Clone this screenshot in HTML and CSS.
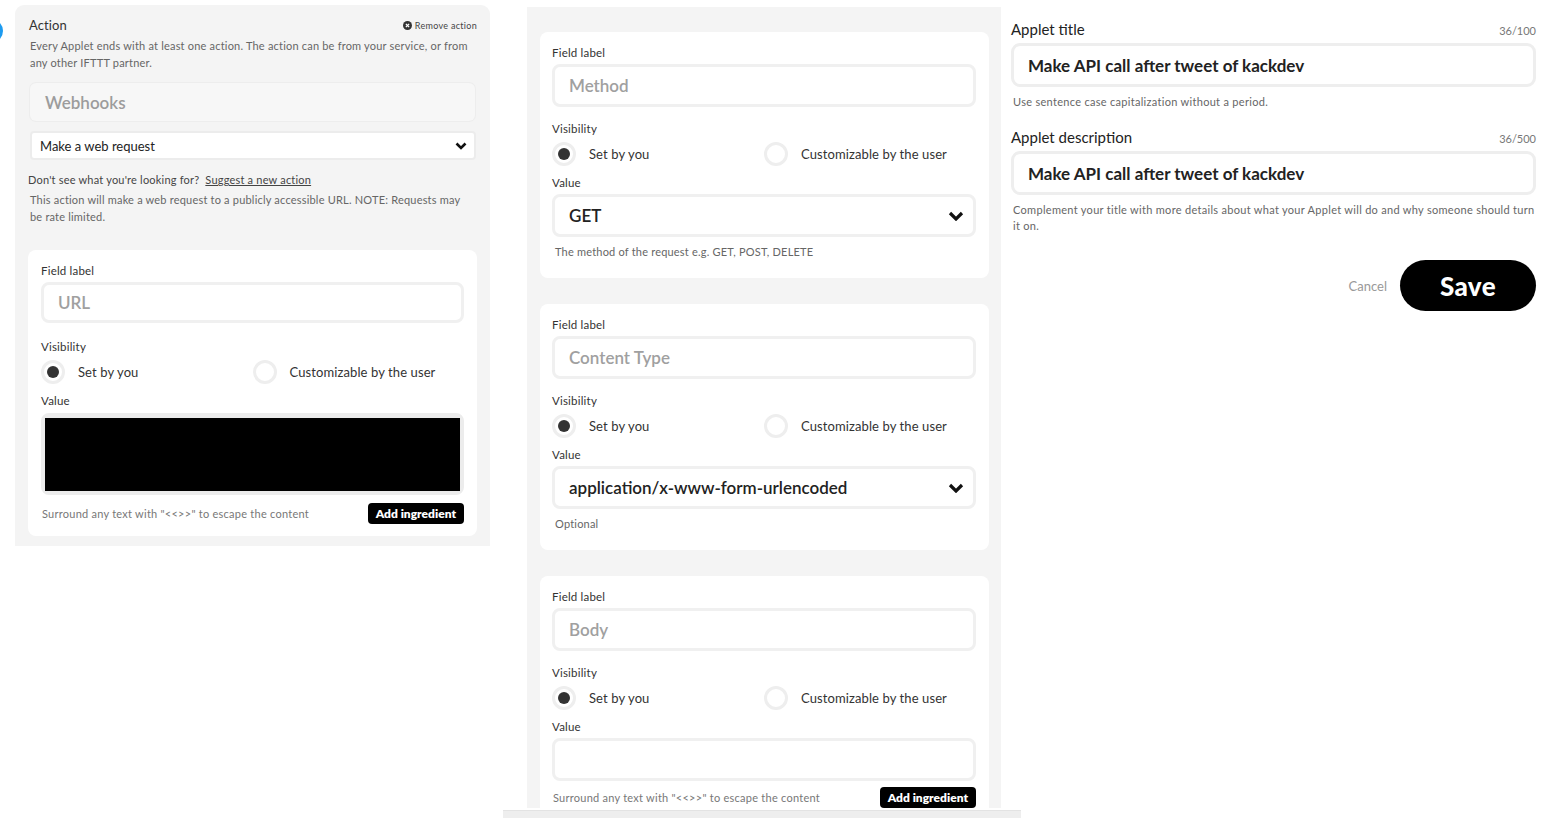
FILE: index.html
```html
<!DOCTYPE html>
<html lang="en">
<head>
<meta charset="utf-8">
<title>IFTTT Applet – Webhooks action</title>
<link rel="stylesheet" href="styles.css">
</head>
<body>
<div class="page">

  <section class="col col-left">
    <span class="service-dot"></span>
    <div class="panel panel-left">
      <div class="action-head">
        <span class="action-title">Action</span>
        <span class="remove">
          <svg width="9" height="9" viewBox="0 0 10 10"><circle cx="5" cy="5" r="5" fill="#333"/><path d="M3.2 3.2l3.6 3.6M6.8 3.2l-3.6 3.6" stroke="#fff" stroke-width="1.5"/></svg>
          Remove action
        </span>
      </div>
      <p class="desc">Every Applet ends with at least one action. The action can be from your service, or from any other IFTTT partner.</p>
      <div class="service-input">Webhooks</div>
      <div class="select-sm">
        <span>Make a web request</span>
        <svg width="12" height="8" viewBox="0 0 12 8"><path d="M1.5 1.5L6 6L10.5 1.5" fill="none" stroke="#111" stroke-width="2.6"/></svg>
      </div>
      <p class="suggest">Don't see what you're looking for? <a href="#">Suggest a new action</a></p>
      <p class="desc desc2">This action will make a web request to a publicly accessible URL. NOTE: Requests may be rate limited.</p>

      <div class="card card-left">
        <div class="lbl">Field label</div>
        <div class="field field-sm ph">URL</div>
        <div class="lbl lbl-vis lbl-vis-lg">Visibility</div>
        <div class="radios">
          <div class="radio"><span class="dot on"></span>Set by you</div>
          <div class="radio"><span class="dot"></span>Customizable by the user</div>
        </div>
        <div class="lbl lbl-val">Value</div>
        <div class="redacted"><div class="redacted-fill"></div></div>
        <div class="footer-row">
          <span class="hint-inline">Surround any text with "&lt;&lt;&gt;&gt;" to escape the content</span>
          <span class="add-btn">Add ingredient</span>
        </div>
      </div>
    </div>
  </section>

  <section class="col col-mid">
    <div class="panel panel-mid">
      <div class="card">
        <div class="lbl">Field label</div>
        <div class="field ph">Method</div>
        <div class="lbl lbl-vis">Visibility</div>
        <div class="radios">
          <div class="radio"><span class="dot on"></span>Set by you</div>
          <div class="radio"><span class="dot"></span>Customizable by the user</div>
        </div>
        <div class="lbl lbl-val">Value</div>
        <div class="field select">
          <span>GET</span>
          <svg width="16" height="10" viewBox="0 0 16 10"><path d="M2 2L8 8L14 2" fill="none" stroke="#111" stroke-width="3.2"/></svg>
        </div>
        <p class="hint">The method of the request e.g. GET, POST, DELETE</p>
      </div>

      <div class="card">
        <div class="lbl">Field label</div>
        <div class="field ph">Content Type</div>
        <div class="lbl lbl-vis">Visibility</div>
        <div class="radios">
          <div class="radio"><span class="dot on"></span>Set by you</div>
          <div class="radio"><span class="dot"></span>Customizable by the user</div>
        </div>
        <div class="lbl lbl-val">Value</div>
        <div class="field select">
          <span>application/x-www-form-urlencoded</span>
          <svg width="16" height="10" viewBox="0 0 16 10"><path d="M2 2L8 8L14 2" fill="none" stroke="#111" stroke-width="3.2"/></svg>
        </div>
        <p class="hint">Optional</p>
      </div>

      <div class="card">
        <div class="lbl">Field label</div>
        <div class="field ph">Body</div>
        <div class="lbl lbl-vis">Visibility</div>
        <div class="radios">
          <div class="radio"><span class="dot on"></span>Set by you</div>
          <div class="radio"><span class="dot"></span>Customizable by the user</div>
        </div>
        <div class="lbl lbl-val">Value</div>
        <div class="field"></div>
        <div class="footer-row footer-row-mid">
          <span class="hint-inline">Surround any text with "&lt;&lt;&gt;&gt;" to escape the content</span>
          <span class="add-btn">Add ingredient</span>
        </div>
      </div>
    </div>
    <div class="hbar"></div>
  </section>

  <section class="col col-right">
    <div class="title-row">
      <span class="big-lbl">Applet title</span>
      <span class="counter">36/100</span>
    </div>
    <div class="title-field">Make API call after tweet of kackdev</div>
    <p class="help">Use sentence case capitalization without a period.</p>

    <div class="title-row title-row-2">
      <span class="big-lbl">Applet description</span>
      <span class="counter">36/500</span>
    </div>
    <div class="title-field">Make API call after tweet of kackdev</div>
    <p class="help">Complement your title with more details about what your Applet will do and why someone should turn it on.</p>

    <div class="actions">
      <span class="cancel">Cancel</span>
      <span class="save">Save</span>
    </div>
  </section>

</div>
</body>
</html>
```

FILE: styles.css
```css
* { box-sizing: border-box; margin: 0; padding: 0; }

body {
  font-family: Lato, "Noto Sans", "DejaVu Sans", sans-serif;
  background: #fff;
  color: #333;
  width: 1555px;
  height: 824px;
  overflow: hidden;
}

.page {
  display: flex;
  align-items: flex-start;
  height: 824px;
}

/* ---------- left column ---------- */
.col-left {
  width: 503px;
  flex-shrink: 0;
  padding: 5px 0 0 15px;
  position: relative;
}

.service-dot {
  position: absolute;
  left: -21px;
  top: 19px;
  width: 24px;
  height: 24px;
  border-radius: 50%;
  background: #1d9bf0;
}

.panel { background: #f4f4f4; }

.panel-left {
  width: 475px;
  border-radius: 9px 9px 0 0;
  padding: 11px 13px 10px 13px;
}

.action-head {
  display: flex;
  justify-content: space-between;
  align-items: center;
  height: 18px;
  padding-left: 1px;
}

.action-title { font-size: 13px; color: #333; letter-spacing: 0.1px; }

.remove {
  display: flex;
  align-items: center;
  gap: 3px;
  font-size: 9px;
  color: #444;
  letter-spacing: 0.3px;
}

.desc {
  font-size: 11px;
  letter-spacing: 0.2px;
  line-height: 17px;
  color: #666;
  padding-left: 2px;
  margin-top: 3px;
}

.service-input {
  margin: 12px 2px 0 2px;
  height: 38px;
  background: #f7f7f7;
  border-radius: 6px;
  box-shadow: 0 0 0 1px #ededed;
  font-size: 17px;
  font-weight: 600;
  color: #9c9c9c;
  padding-left: 15px;
  display: flex;
  align-items: center;
}

.select-sm {
  margin: 10px 1px 0 2px;
  height: 29px;
  background: #fff;
  border: 2px solid #ececec;
  border-radius: 4px;
  display: flex;
  align-items: center;
  justify-content: space-between;
  padding: 0 7px 0 8px;
  font-size: 13px;
  color: #222;
}

.suggest {
  margin-top: 11px;
  font-size: 11px;
  letter-spacing: 0.2px;
  line-height: 17px;
  color: #444;
}

.suggest a { color: #444; text-decoration: underline; margin-left: 3px; }

.desc2 { margin-top: 3px; padding-right: 12px; }

/* ---------- cards ---------- */
.card {
  background: #fff;
  border-radius: 8px;
  padding: 13px 13px 18px 12px;
  flex-shrink: 0;
}

.card-left {
  margin-top: 25px;
  padding: 13px 13px 12px 13px;
}

.lbl {
  font-size: 11.5px;
  letter-spacing: 0.2px;
  line-height: 16px;
  color: #333;
}

.lbl-vis { margin-top: 14px; }
.lbl-vis-lg { margin-top: 16px; }
.lbl-val { margin-top: 9px; }

.field {
  margin-top: 3px;
  height: 43px;
  border: 3px solid #f0f0f0;
  border-radius: 8px;
  display: flex;
  align-items: center;
  justify-content: space-between;
  padding: 0 9px 0 14px;
  font-size: 17px;
  background: #fff;
}

.field-sm { height: 41px; }

.ph { color: #a0a0a0; font-weight: 600; }

.select { color: #222; font-weight: 600; }

.radios {
  margin-top: 5px;
  display: grid;
  grid-template-columns: 1fr 1fr;
  height: 24px;
}

.radio {
  display: flex;
  align-items: center;
  gap: 13px;
  font-size: 13px;
  letter-spacing: 0.1px;
  color: #333;
}

.dot {
  width: 24px;
  height: 24px;
  border-radius: 50%;
  border: 3px solid #eeeeee;
  background: #fff;
  display: flex;
  align-items: center;
  justify-content: center;
  flex-shrink: 0;
}

.dot.on::after {
  content: "";
  width: 12px;
  height: 12px;
  border-radius: 50%;
  background: #333;
}

.hint {
  margin-top: 7px;
  font-size: 11px;
  letter-spacing: 0.2px;
  line-height: 16px;
  color: #666;
  padding-left: 3px;
}

.redacted {
  margin-top: 4px;
  height: 82px;
  border: 4px solid #ececec;
  border-top-width: 5px;
  border-radius: 8px;
  background: #fff;
}

.redacted-fill {
  height: 100%;
  background: #000;
}

.footer-row {
  margin-top: 8px;
  height: 21px;
  display: flex;
  align-items: center;
  justify-content: space-between;
}

.footer-row-mid { margin-top: 6px; }

.hint-inline {
  font-size: 11px;
  letter-spacing: 0.25px;
  color: #777;
  padding-left: 1px;
}

.add-btn {
  height: 21px;
  display: flex;
  align-items: center;
  padding: 0 8px;
  background: #000;
  color: #fff;
  border-radius: 4px;
  font-size: 12px;
  font-weight: 800;
}

/* ---------- middle column ---------- */
.col-mid {
  width: 498px;
  flex-shrink: 0;
  padding: 7px 0 0 24px;
}

.panel-mid {
  width: 474px;
  height: 801px;
  overflow: hidden;
  padding: 25px 12px 0 13px;
  display: flex;
  flex-direction: column;
  gap: 26px;
}

.hbar {
  width: 518px;
  margin-left: -24px;
  margin-top: 2px;
  height: 8px;
  background: #eeeeee;
  border-top: 1px solid #e3e3e3;
}

/* ---------- right column ---------- */
.col-right {
  flex: 1;
  padding: 19px 19px 0 10px;
}

.title-row {
  display: flex;
  justify-content: space-between;
  align-items: flex-end;
  height: 20px;
}

.title-row-2 { margin-top: 17px; }

.big-lbl { font-size: 15px; line-height: 20px; color: #222; }

.counter { font-size: 11px; line-height: 16px; color: #777; }

.title-field {
  margin-top: 4px;
  height: 44px;
  border: 3px solid #eeeeee;
  border-radius: 9px;
  padding-left: 14px;
  font-size: 17px;
  font-weight: 700;
  color: #222;
  display: flex;
  align-items: center;
}

.help {
  margin-top: 7px;
  font-size: 11px;
  letter-spacing: 0.3px;
  line-height: 16px;
  color: #666;
  padding-left: 2px;
}

.actions {
  margin-top: 26px;
  display: flex;
  justify-content: flex-end;
  align-items: center;
  gap: 13px;
}

.cancel { font-size: 13px; color: #999; }

.save {
  width: 136px;
  height: 51px;
  border-radius: 26px;
  background: #000;
  color: #fff;
  font-size: 26px;
  letter-spacing: 0.4px;
  font-weight: 900;
  display: flex;
  align-items: center;
  justify-content: center;
}
```
